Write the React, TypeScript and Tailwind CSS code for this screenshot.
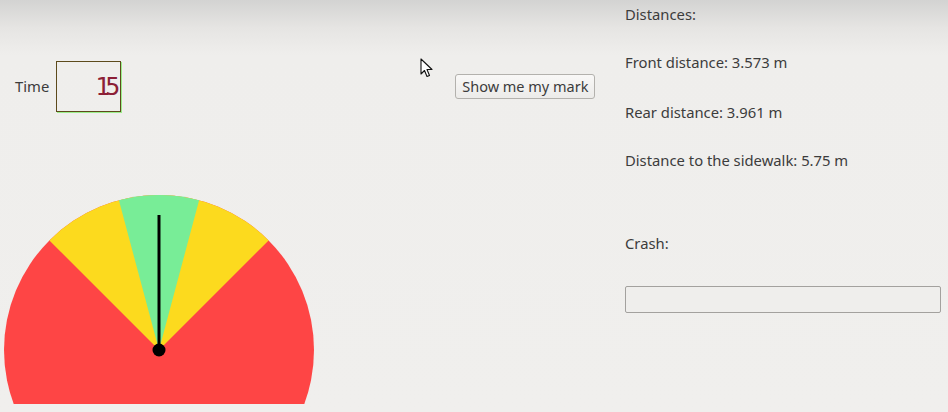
import React from "react";

function Gauge() {
  return (
    <svg width="320" height="222" viewBox="0 0 320 222" className="block">
      <defs>
        <clipPath id="gclip">
          <rect x="0" y="0" width="320" height="214" />
        </clipPath>
      </defs>
      <g clipPath="url(#gclip)">
        <circle cx="159" cy="160" r="155" fill="#fe4545" />
        <path d="M159 160 L268.6 50.4 A155 155 0 0 0 49.4 50.4 Z" fill="#fcda1e" />
        <path d="M159 160 L199.1 10.3 A155 155 0 0 0 118.9 10.3 Z" fill="#78ed97" />
      </g>
      <line x1="159" y1="160" x2="159" y2="25" stroke="#000" strokeWidth="3" />
      <circle cx="159" cy="160" r="6.5" fill="#000" />
    </svg>
  );
}

function Cursor() {
  return (
    <svg width="14" height="22" viewBox="0 0 14 22" className="absolute left-[420px] top-[58px]">
      <path d="M1 1 L1 16 L4.5 12.5 L7 18.5 L9.5 17.5 L7 11.5 L12 11.5 Z" fill="#fff" stroke="#111" strokeWidth="1.1" strokeLinejoin="round" />
    </svg>
  );
}

export default function App() {
  const font = { fontFamily: '"Noto Sans", "Open Sans", "DejaVu Sans", sans-serif' };
  return (
    <div
      className="relative w-[948px] h-[412px] overflow-hidden flex bg-[linear-gradient(to_bottom,#d3d3d2_0px,#e6e5e3_28px,#efeeec_55px,#f0efed_100%)] text-[14.8px] text-[#3c3c3c]"
      style={font}
    >
      <div className="w-[625px] flex flex-col">
        <div className="flex items-center pt-[61px] pl-[15px]">
          <span className="leading-none">Time</span>
          <div className="ml-[7px] w-[65px] h-[51px] border border-[#5d4a1c] shadow-[1px_1px_0_#9bee8a] flex items-center justify-end pr-[1px]">
            <span
              className="text-[25px] leading-none text-[#8c1f36] tracking-[-5px] pr-[4px]"
              style={{ fontFamily: '"DejaVu Sans Mono", "Liberation Mono", monospace' }}
            >
              15
            </span>
          </div>
          <button className="ml-[334px] h-[25px] px-[6px] rounded-[3px] border border-[#b3b1ad] bg-[linear-gradient(to_bottom,#f9f8f7,#ecebe9)] text-[14.5px] leading-none text-[#3c3c3c]">
            Show me my mark
          </button>
        </div>
        <div className="mt-[78px]">
          <Gauge />
        </div>
      </div>
      <div className="flex flex-col pt-[4px]">
        <div className="h-[20px] leading-[20px]">Distances:</div>
        <div className="mt-[28px] h-[20px] leading-[20px]">Front distance: 3.573 m</div>
        <div className="mt-[30px] h-[20px] leading-[20px]">Rear distance: 3.961 m</div>
        <div className="mt-[28px] h-[20px] leading-[20px]">Distance to the sidewalk: 5.75 m</div>
        <div className="mt-[63px] h-[20px] leading-[20px]">Crash:</div>
        <div className="mt-[33px] w-[316px] h-[27px] rounded-[2px] border border-[#a3a19e] bg-[#efeeec]" />
      </div>
      <Cursor />
    </div>
  );
}
